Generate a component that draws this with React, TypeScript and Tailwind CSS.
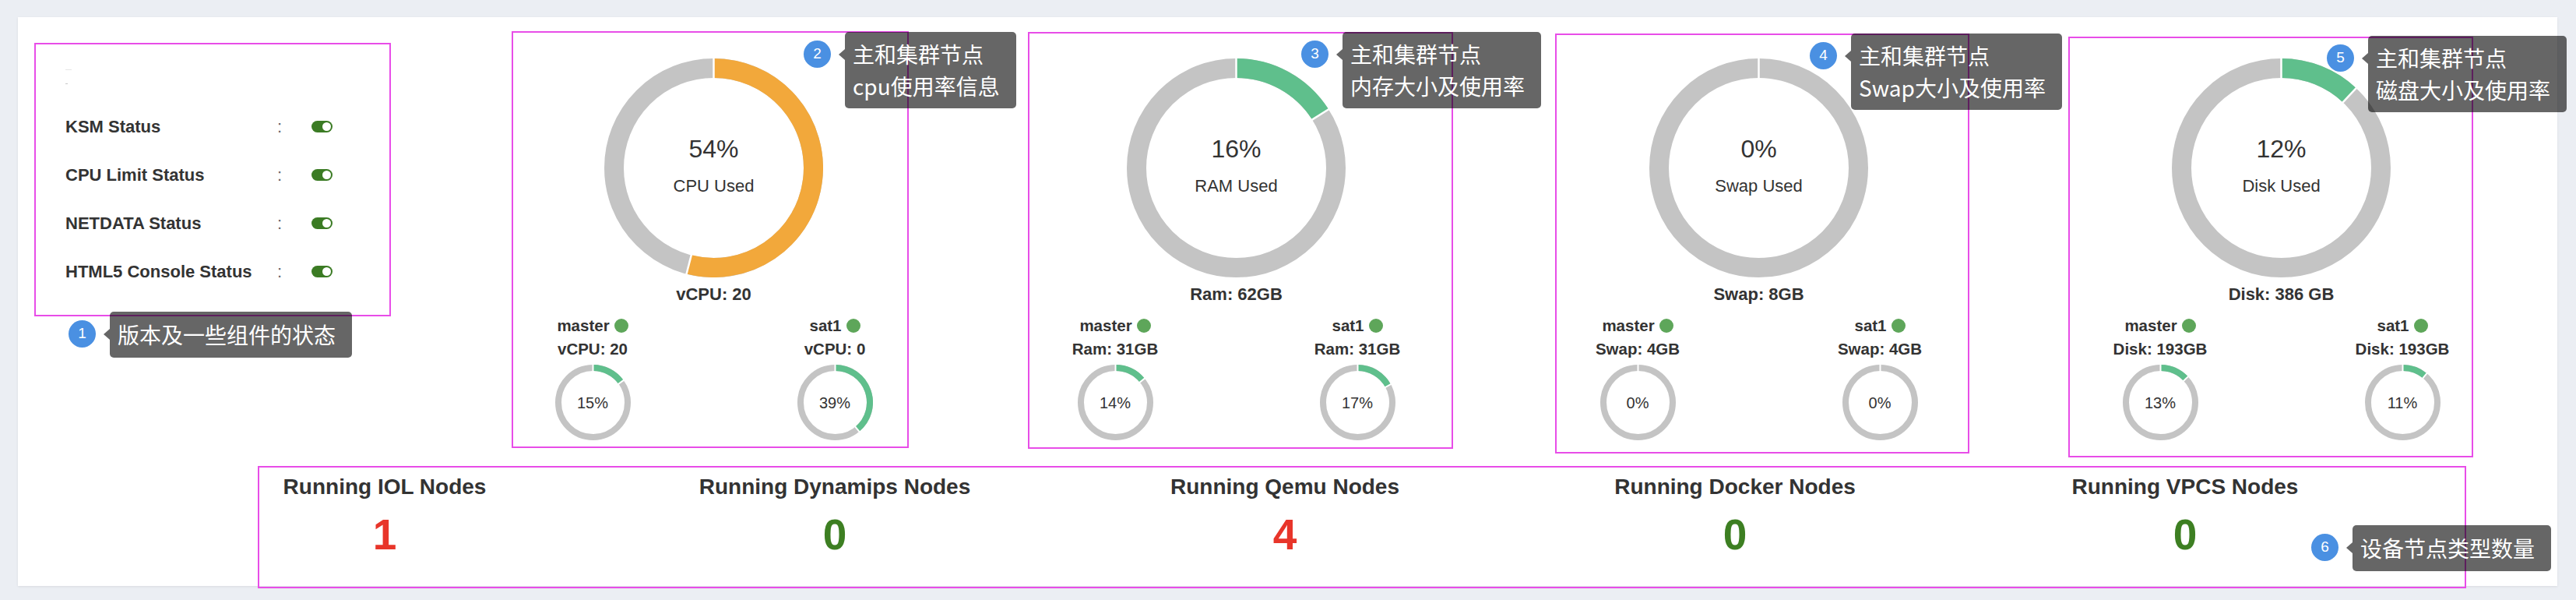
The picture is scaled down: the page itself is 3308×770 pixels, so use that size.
import React from "react";

type NodeInfo = { name: string; val: string; pct: number };
type Res = { pct: number; color: string; label: string; total: string; nodes: NodeInfo[] };

const GREEN = "#5fbf8c";
const ORANGE = "#f2a83b";

const resources: Res[] = [
  {
    pct: 54,
    color: ORANGE,
    label: "CPU Used",
    total: "vCPU: 20",
    nodes: [
      { name: "master", val: "vCPU: 20", pct: 15 },
      { name: "sat1", val: "vCPU: 0", pct: 39 },
    ],
  },
  {
    pct: 16,
    color: GREEN,
    label: "RAM Used",
    total: "Ram: 62GB",
    nodes: [
      { name: "master", val: "Ram: 31GB", pct: 14 },
      { name: "sat1", val: "Ram: 31GB", pct: 17 },
    ],
  },
  {
    pct: 0,
    color: GREEN,
    label: "Swap Used",
    total: "Swap: 8GB",
    nodes: [
      { name: "master", val: "Swap: 4GB", pct: 0 },
      { name: "sat1", val: "Swap: 4GB", pct: 0 },
    ],
  },
  {
    pct: 12,
    color: GREEN,
    label: "Disk Used",
    total: "Disk: 386 GB",
    nodes: [
      { name: "master", val: "Disk: 193GB", pct: 13 },
      { name: "sat1", val: "Disk: 193GB", pct: 11 },
    ],
  },
];

const statuses = ["KSM Status", "CPU Limit Status", "NETDATA Status", "HTML5 Console Status"];

const counts = [
  { label: "Running IOL Nodes", value: 1, red: true },
  { label: "Running Dynamips Nodes", value: 0, red: false },
  { label: "Running Qemu Nodes", value: 4, red: true },
  { label: "Running Docker Nodes", value: 0, red: false },
  { label: "Running VPCS Nodes", value: 0, red: false },
];

function Donut({ size, width, pct, color, sep }: { size: number; width: number; pct: number; color: string; sep: number }) {
  const c = size / 2;
  const r = (size - width) / 2;
  const t = (pct / 100) * Math.PI * 2;
  const ex = c + r * Math.sin(t);
  const ey = c - r * Math.cos(t);
  const large = pct > 50 ? 1 : 0;
  const line = (a: number, k: string) => {
    const ri = r - width / 2 - 1;
    const ro = r + width / 2 + 1;
    return (
      <line
        key={k}
        x1={c + ri * Math.sin(a)}
        y1={c - ri * Math.cos(a)}
        x2={c + ro * Math.sin(a)}
        y2={c - ro * Math.cos(a)}
        stroke="#ffffff"
        strokeWidth={sep}
      />
    );
  };
  return (
    <svg width={size} height={size} viewBox={`0 0 ${size} ${size}`} className="block">
      <circle cx={c} cy={c} r={r} fill="none" stroke="#c4c4c4" strokeWidth={width} />
      {pct > 0 && (
        <path d={`M ${c} ${c - r} A ${r} ${r} 0 ${large} 1 ${ex} ${ey}`} fill="none" stroke={color} strokeWidth={width} />
      )}
      {line(0, "a")}
      {pct > 0 && line(t, "b")}
    </svg>
  );
}

function Toggle() {
  return (
    <div className="w-[27px] h-[15px] rounded-full bg-[#3b7b24] flex items-center justify-end pr-[2px]">
      <div className="w-[11px] h-[11px] rounded-full bg-white" />
    </div>
  );
}

function ResourceCol({ res }: { res: Res }) {
  return (
    <div className="w-[671px] shrink-0 flex flex-col items-center">
      <div className="relative w-[281px] h-[281px]">
        <Donut size={281} width={25} pct={res.pct} color={res.color} sep={2.5} />
        <div className="absolute inset-0 flex flex-col items-center justify-center pb-[7px]">
          <div className="text-[32px] leading-[36px] text-[#333]">{res.pct}%</div>
          <div className="text-[22px] leading-[26px] mt-[17px] text-[#333]">{res.label}</div>
        </div>
      </div>
      <div className="text-[22px] font-bold leading-[30px] mt-[7px] whitespace-nowrap">{res.total}</div>
      <div className="flex w-full justify-between px-[115px] mt-[10px]">
        {res.nodes.map((n, i) => (
          <div key={i} className="w-[130px] flex flex-col items-center">
            <div className="flex items-center gap-[6px] text-[20.5px] font-bold leading-[30px] whitespace-nowrap">
              <span>{n.name}</span>
              <span className="w-[18px] h-[18px] rounded-full bg-[#5ea65a]" />
            </div>
            <div className="text-[20.5px] font-bold leading-[30px] whitespace-nowrap">{n.val}</div>
            <div className="relative w-[97px] h-[97px] mt-[5px]">
              <Donut size={97} width={8} pct={n.pct} color={GREEN} sep={2} />
              <div className="absolute inset-0 flex items-center justify-center text-[20px] text-[#333]">{n.pct}%</div>
            </div>
          </div>
        ))}
      </div>
    </div>
  );
}

function Callout({ num, lines, pos }: { num: number; lines: string[]; pos: string }) {
  const single = lines.length === 1;
  return (
    <div className={`absolute flex items-start ${pos}`}>
      <div className="w-[35px] h-[35px] mt-[11px] rounded-full bg-[#4a90e2] text-white flex items-center justify-center text-[19px] font-['Liberation_Sans',sans-serif]">
        {num}
      </div>
      <div className="ml-[10px] mt-[22px] w-0 h-0 border-y-[7px] border-y-transparent border-r-[8px] border-r-black/60" />
      <div
        className={`bg-black/60 text-white rounded-[5px] pl-[10px] pr-[21px] text-[28px] leading-[41px] whitespace-nowrap font-['Noto_Sans_CJK_SC','Noto_Sans',sans-serif] ${
          single ? "py-[9px]" : "py-[8px]"
        }`}
      >
        {lines.map((l, i) => (
          <div key={i}>{l}</div>
        ))}
      </div>
    </div>
  );
}

export default function App() {
  return (
    <div className="relative w-[3308px] h-[770px] overflow-hidden bg-[#ebeef3] pt-[22px] pl-[23px] pr-[24px] font-['Liberation_Sans','Noto_Sans_CJK_SC',sans-serif] text-[#333]">
      <div className="h-[730px] bg-white shadow-[0_1px_3px_rgba(0,0,0,0.08)] flex flex-col pt-[53px]">
        {/* Top row */}
        <div className="flex">
          <div className="w-[558px] shrink-0 pl-[61px]">
            <div className="h-[56px] flex flex-col">
              <div className="mt-[14px] w-[8px] h-[1px] bg-[#e6e6e6]" />
              <div className="mt-[17px] w-[3px] h-[1px] bg-[#c8c8c8]" />
            </div>
            {statuses.map((s) => (
              <div key={s} className="h-[62px] flex items-center">
                <div className="w-[272px] text-[22px] font-bold whitespace-nowrap">{s}</div>
                <div className="w-[44px] text-[22px] text-[#666]">:</div>
                <Toggle />
              </div>
            ))}
          </div>
          {resources.map((r) => (
            <ResourceCol key={r.label} res={r} />
          ))}
        </div>
        {/* Bottom row */}
        <div className="flex pl-[182px] mt-[43px]">
          {counts.map((c) => (
            <div key={c.label} className="w-[578px] shrink-0 flex flex-col items-center">
              <div className="text-[28px] font-bold leading-[34px] whitespace-nowrap">{c.label}</div>
              <div className={`text-[55px] font-bold leading-[62px] mt-[13px] ${c.red ? "text-[#e8352a]" : "text-[#3d7f22]"}`}>
                {c.value}
              </div>
            </div>
          ))}
        </div>
      </div>

      {/* Annotation frames */}
      <div className="absolute left-[44px] top-[55px] w-[458px] h-[351px] border-2 border-[#e84de8]" />
      <div className="absolute left-[657px] top-[40px] w-[510px] h-[535px] border-2 border-[#e84de8]" />
      <div className="absolute left-[1320px] top-[41px] w-[546px] h-[535px] border-2 border-[#e84de8]" />
      <div className="absolute left-[1997px] top-[43px] w-[532px] h-[539px] border-2 border-[#e84de8]" />
      <div className="absolute left-[2656px] top-[47px] w-[520px] h-[540px] border-2 border-[#e84de8]" />
      <div className="absolute left-[331px] top-[598px] w-[2836px] h-[157px] border-2 border-[#e84de8]" />

      {/* Callouts */}
      <Callout num={1} lines={["版本及一些组件的状态"]} pos="left-[88px] top-[400px]" />
      <Callout num={2} lines={["主和集群节点", "cpu使用率信息"]} pos="left-[1032px] top-[41px]" />
      <Callout num={3} lines={["主和集群节点", "内存大小及使用率"]} pos="left-[1671px] top-[41px]" />
      <Callout num={4} lines={["主和集群节点", "Swap大小及使用率"]} pos="left-[2324px] top-[43px]" />
      <Callout num={5} lines={["主和集群节点", "磁盘大小及使用率"]} pos="left-[2988px] top-[46px]" />
      <Callout num={6} lines={["设备节点类型数量"]} pos="left-[2968px] top-[674px]" />
    </div>
  );
}
